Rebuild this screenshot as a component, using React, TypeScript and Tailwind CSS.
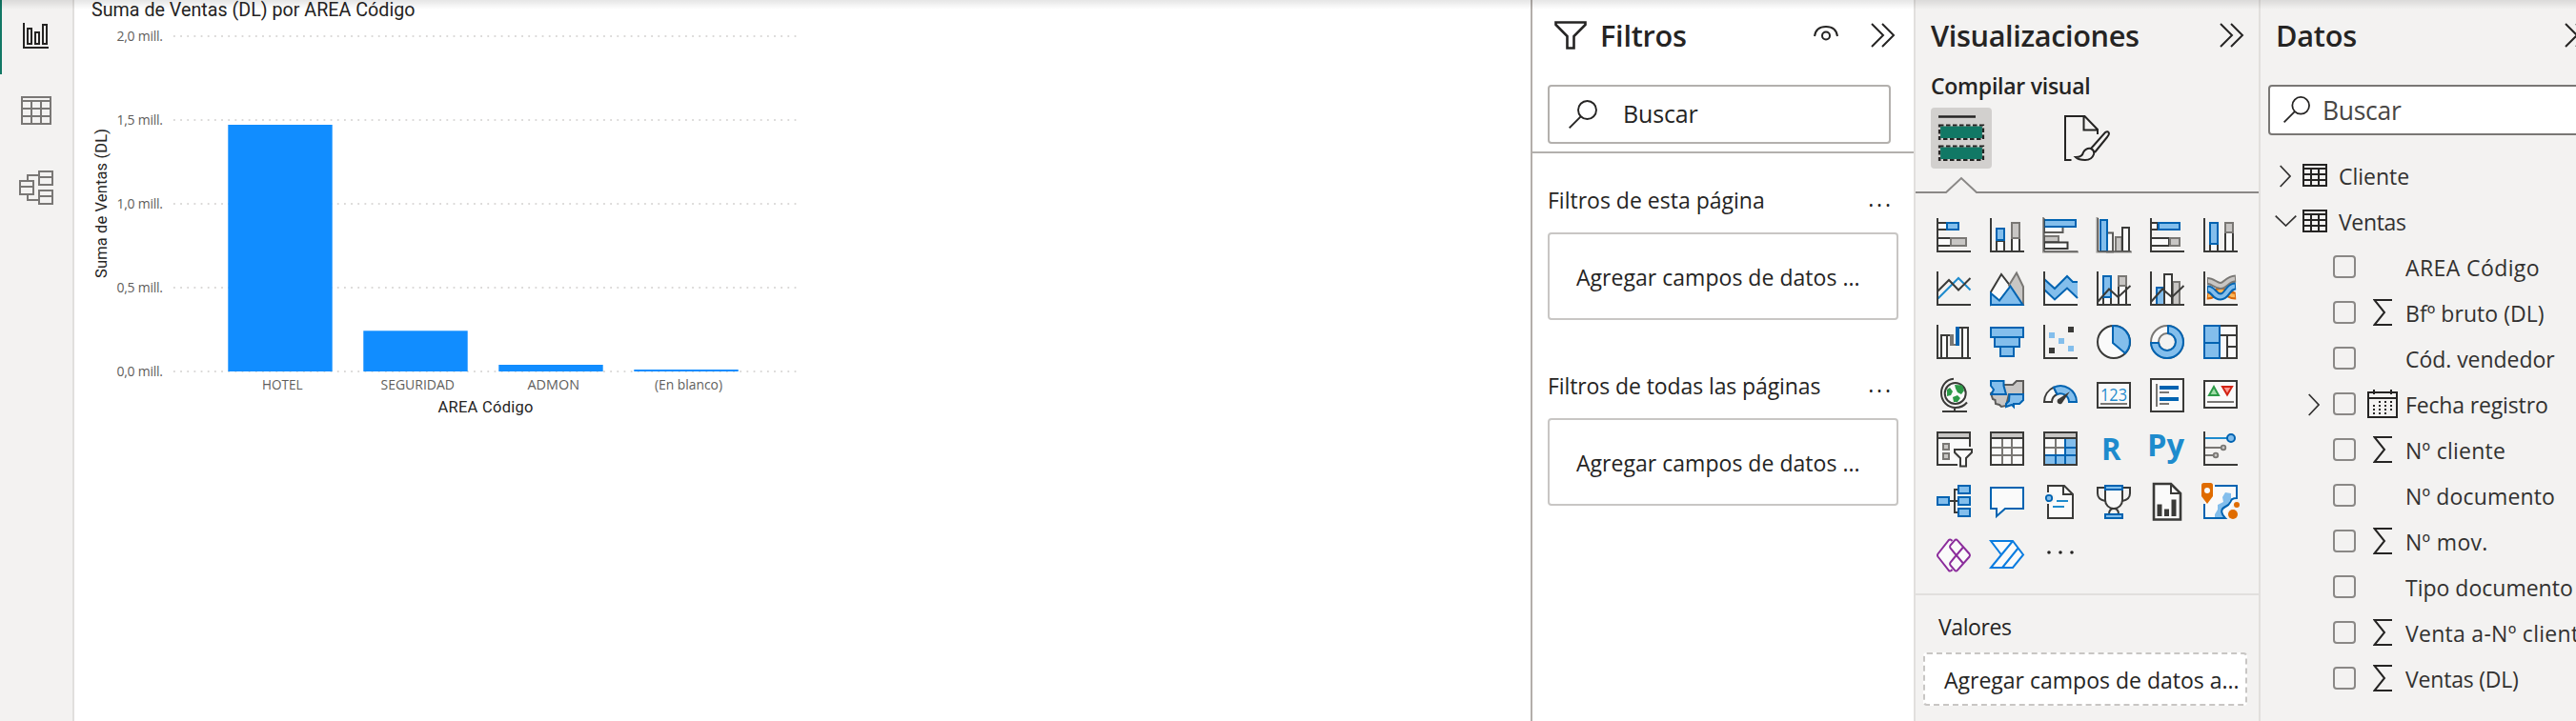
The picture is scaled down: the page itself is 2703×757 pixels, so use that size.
import type { ReactNode } from "react";

const D = "#3a3a38";
const B = "#0063b1";
const L = "#83beec";
const G = "#797774";
const S = "#c8c6c4";
const W = "#fafafa";
const T = "#1e8bcd";

type RectProps = { x: number; y: number; w: number; h: number; s?: string; f?: string };
const R = ({ x, y, w, h, s = D, f = W }: RectProps) => (
  <rect x={x} y={y} width={w} height={h} stroke={s} fill={f} strokeWidth={2} />
);
const Axis = () => <path d="M1 0V35H36" stroke={D} strokeWidth={2} fill="none" />;
const P = ({ d, s = D, f = "none", w = 2 }: { d: string; s?: string; f?: string; w?: number }) => (
  <path d={d} stroke={s} fill={f} strokeWidth={w} />
);

const visuals: { name: string; art: ReactNode }[] = [
  { name: "stacked-bar", art: <><R x={1} y={5} w={10} h={7} /><R x={11} y={5} w={12} h={7} s={B} f={L} /><R x={1} y={21} w={14} h={8} /><R x={15} y={21} w={16} h={8} s={G} f={S} /><Axis /></> },
  { name: "stacked-column", art: <><R x={7} y={24} w={8} h={11} /><R x={7} y={11} w={8} h={12} s={B} f={L} /><R x={23} y={21} w={8} h={14} /><R x={23} y={5} w={8} h={16} s={G} f={S} /><Axis /></> },
  { name: "clustered-bar", art: <><R x={1} y={9} w={19.5} h={6} s={"#5c5b59"} /><R x={1} y={2} w={33} h={7} s={B} f={L} /><R x={1} y={19} w={15} h={6} s={G} f={S} /><R x={1} y={25.5} w={24.5} h={6.5} /><P d="M0 -1V35.5H37" s="#979593" w={2} /><P d="M1 0V35H36" w={1} /></> },
  { name: "clustered-column", art: <><R x={11} y={15.5} w={6} h={20} s={"#5c5b59"} /><R x={4} y={2} w={7} h={33} s={B} f={L} /><R x={20} y={20} w={6.5} h={15} s={G} f={S} /><R x={27} y={10} w={7} h={25} /><P d="M0.5 -1V35.5H37" s="#979593" w={2} /><P d="M1.5 0V35H36" w={1} /></> },
  { name: "full-bar", art: <><R x={1} y={5} w={7} h={7} /><R x={9} y={5} w={22} h={7} s={B} f={L} /><R x={1} y={21} w={19} h={8} /><R x={21} y={21} w={10} h={8} s={G} f={S} /><Axis /></> },
  { name: "full-column", art: <><R x={7} y={27} w={8} h={8} /><R x={7} y={5} w={8} h={22} s={B} f={L} /><R x={23} y={15} w={8} h={20} /><R x={23} y={5} w={8} h={10} s={G} f={S} /><Axis /></> },

  { name: "line", art: <><P d="M1.5 28.5L23 7L35.5 19.5" s={T} /><P d="M1 21L13 9L23 19.5L35.5 7" /><Axis /></> },
  { name: "area", art: <><P d="M1 35V21.5L12 3L22 16L10 31Z" f={W} /><P d="M20 14.5L28 1.5L35 16V35H33Z" s={G} f={S} /><P d="M1 35V23L10 30.5L21.5 15.5L34.5 35Z" s={B} f={L} /></> },
  { name: "stacked-area", art: <><path d="M1 18L12 28L25 17L36 28V35H1Z" fill={W} /><path d="M1 8L12 18L25 5L31 11H36V28L25 17.5L12 29.5L1 19Z" fill={L} /><P d="M1 8L12 18L25 5L31 11H36M1 19L12 29.5L25 17.5L36 28" s={B} /><Axis /></> },
  { name: "line-stacked", art: <><R x={7} y={27} w={8} h={8} /><R x={7} y={5} w={8} h={22} s={B} f={L} /><R x={23} y={15} w={8} h={20} /><R x={23} y={5} w={8} h={10} s={G} f={S} /><P d="M1 32L13 18.5L22.5 27L35.5 15" /><Axis /></> },
  { name: "line-clustered", art: <><R x={7} y={17} w={8} h={18} s={B} f={L} /><R x={24} y={11} w={7} h={24} s={G} f={S} /><R x={15} y={3} w={8} h={32} /><P d="M1 32L13 18.5L23 27L35.5 15" /><Axis /></> },
  { name: "ribbon", art: <><P d="M4 25.5C10 26 13 20.5 18.5 20.5S27 26 34 25.5" s="#d9690a" w={8} /><P d="M5 25.5C10 26 13 20.5 18.5 20.5S27 26 33 25.5" s="#fdb759" w={3.5} /><P d="M4 10C10 10 13 15 18 15S25 8 34 7.5" s={G} w={8} /><P d="M5 10C10 10 13 15 18 15S25 8 33 7.5" s={S} w={4} /><P d="M4 18.5C11 18.5 11 26.5 18 26.5S25 16 34 15.5" s={B} w={8} /><P d="M5 18.5C11 18.5 11 26.5 18 26.5S25 16 33 15.5" s={L} w={4} /><Axis /></> },

  { name: "waterfall", art: <><P d="M4 11H16" s={D} /><R x={5} y={11} w={6} h={24} /><rect x={14} y={10} width={4} height={12} fill={G} /><path d="M18 20H22V22H18Z" fill={G} /><rect x={20} y={2} width={4} height={20} fill={B} /><P d="M24 3H30" /><R x={27} y={3} w={6} h={32} /><Axis /></> },
  { name: "funnel", art: <><R x={1} y={3} w={34} h={10} s={B} f={L} /><R x={5} y={13} w={26} h={10} s={B} f={L} /><R x={11} y={23} w={14} h={10} s={B} f={L} /></> },
  { name: "scatter", art: <><rect x={6} y={8} width={6} height={6} fill={L} /><rect x={26} y={2} width={6} height={6} fill={D} /><rect x={16} y={14} width={6} height={6} fill={L} /><rect x={26} y={22} width={6} height={6} fill={L} /><rect x={6} y={24} width={6} height={6} fill={D} /><Axis /></> },
  { name: "pie", art: <><circle cx={18} cy={18} r={17} fill={W} stroke={D} strokeWidth={2} /><P d="M17 1A17 17 0 0 1 30 30L17 19Z" s={B} f={L} /></> },
  { name: "donut", art: <><circle cx={18} cy={18} r={17} fill={W} stroke={G} strokeWidth={2} /><circle cx={18} cy={18} r={9} fill="#f3f2f1" stroke={G} strokeWidth={2} /><P d="M19 1A17 17 0 1 1 1 19H9A9 9 0 1 0 19 9Z" s={B} f={L} /></> },
  { name: "treemap", art: <><R x={1} y={1} w={34} h={34} /><P d="M18 11H35M25 11V35M25 23H35" /><R x={1} y={1} w={16} h={18} s={B} f={L} /><R x={1} y={19} w={16} h={16} s={B} f={L} /></> },

  { name: "map", art: <><circle cx={19.7} cy={16} r={11} fill={W} stroke={D} strokeWidth={2} /><path d="M19 7L27 7.5L29 13L26 17L22 15L20 11ZM11 12L14 10L17 14L15 18L11 19ZM17 20L22 18L25 21L22 25H18Z" fill="#2c9a47" /><P d="M18 0.8C10 1.5 5 8 5 15.5C5 25 12 31 20 31C25 31 29 29 32 25.5M19 31V35M6 35H32" /></> },
  { name: "shape-map", art: <><P d="M14.5 7H24L28 3H35V17H20L17 29L12 30L10 28L6 27L5.5 23L3 22L1 16Z" s="#5c5b59" f={S} /><P d="M1 3H14.5V8L17 17H1.5L4 12L1 8Z" s={B} f={L} /><P d="M20.5 17H35V23L31 27H25V30L23 28L17 30V27L20 24Z" s={B} f={L} /></> },
  { name: "gauge", art: <><P d="M1 25A17 17 0 0 1 11 9.7L14.5 17A9 9 0 0 0 9 25Z" f={W} /><P d="M11 9.7A17 17 0 0 1 35 25H27A9 9 0 0 0 14.5 17Z" s={B} f={L} /><path d="M28 14L20.5 25A3 3 0 1 1 16.5 21.5Z" fill={D} /></> },
  { name: "card", art: <><R x={1} y={5} w={34} h={26} /><text x={4} y={24} fontSize={19} textLength={28} lengthAdjust="spacingAndGlyphs" fill={T} className="font-['Open_Sans',sans-serif]">123</text><P d="M4 27H32" s={G} /></> },
  { name: "multi-card", art: <><R x={1} y={1} w={34} h={34} /><P d="M7 6V30M10 15H20M10 27H20" s={G} /><P d="M10 10H30M10 22H30" s={B} w={4} /></> },
  { name: "kpi", art: <><R x={1} y={3} w={34} h={28} /><P d="M6 18L11 9L16 18Z" s="#2c9a47" f="#a1dda8" /><P d="M20 9H30L25 17.5Z" s="#d32314" f="#ff9a93" /><P d="M4 25H32" s={G} /></> },

  { name: "slicer", art: <><path d="M1 1H35V18H18V25L24 31V35H1Z" fill={W} /><rect x={1} y={1} width={34} height={6} fill={S} /><P d="M35 16V1H1V35H22M1 7H35" /><R x={7} y={13} w={6} h={6} s={G} f={S} /><R x={7} y={23} w={6} h={6} s={G} f={S} /><P d="M19 19H37V22L31 28V36.5H25V28L19 22Z" f={W} /></> },
  { name: "table", art: <><R x={1} y={1} w={34} h={34} /><P d="M13 8V34M23 8V34M2 17H34M2 25H34" s={G} /><R x={1} y={1} w={34} h={6} f={S} /></> },
  { name: "matrix", art: <><R x={1} y={1} w={34} h={34} /><P d="M13 8V24M2 17H23" s={G} /><path d="M23 8H34V34H2V25H23Z" fill={L} /><P d="M23 8V34M13 25V34M2 25H34M23 17H34" s={B} /><R x={1} y={1} w={34} h={6} f={S} /><P d="M1 0V36M35 0V36M0 35H36" /></> },
  { name: "r-script", art: <text x={5} y={30} fontSize={33} textLength={20.5} lengthAdjust="spacingAndGlyphs" fill={T} className="font-['Open_Sans',sans-serif] font-bold">R</text> },
  { name: "py-script", art: <text x={-3} y={26} fontSize={33} textLength={39} lengthAdjust="spacingAndGlyphs" fill={T} className="font-['Open_Sans',sans-serif] font-bold">Py</text> },
  { name: "key-influencers", art: <><P d="M2 7H25" s={T} /><P d="M2 17H19M2 25H11" s={G} /><circle cx={29} cy={7} r={4} fill={L} stroke={B} strokeWidth={2} /><circle cx={21} cy={17} r={2.3} fill={S} stroke={G} strokeWidth={1.8} /><circle cx={13} cy={25} r={2.3} fill={S} stroke={G} strokeWidth={1.8} /><Axis /></> },

  { name: "decomposition", art: <><P d="M14 17H22M22 5H19V29H22" /><R x={1} y={13} w={12} h={8} s={B} f={L} /><R x={23} y={1} w={12} h={8} s={B} f={L} /><R x={23} y={13} w={12} h={8} s={B} f={L} /><R x={23} y={25} w={12} h={8} s={B} f={L} /></> },
  { name: "qna", art: <P d="M1 3H35V25H16L7 33V25H1Z" s={B} f={W} /> },
  { name: "narrative", art: <><path d="M5 1H22L31 10V35H5Z" fill={W} /><P d="M5 8V1H22L31 10V35H5V20M21 1V10H31" /><circle cx={6} cy={14} r={6} fill="#f3f2f1" /><circle cx={6} cy={14} r={3.2} fill={L} stroke={B} strokeWidth={1.8} /><P d="M14 17H26M10 23H22" s={T} /></> },
  { name: "goals", art: <><P d="M9 3H1V9C1 13 4 16 9 17M27 3H35V9C35 13 32 16 27 17" /><P d="M9 5V16C9 21 13 25 18 25S27 21 27 16V5Z" f={W} /><P d="M13 31C13 27 15 25 18 25S23 27 23 31" /><R x={9} y={1} w={18} h={4} s={B} f={L} /><R x={9} y={31} w={18} h={4} s={B} f={L} /></> },
  { name: "paginated", art: <><P d="M4 -1H22L32 9V36.5H4Z" f={W} w={2.6} /><P d="M22 -1V9H32" /><path d="M7.5 20.5H12.5V33H7.5ZM15 25.5H20V33H15ZM22.5 15.5H27.5V33H22.5Z" fill={D} /></> },
  { name: "azure-map", art: <><path d="M1 1H35V14L23 35H1Z" fill={W} /><path d="M35 14H29V9L23 8L20 13L21 18L15 21V26L12 31V35H22L19 27L25 23L28 16Z" fill={L} /><P d="M12 1H35V14C26 14 31 20 23 23C17 26 19 31 23 35H1V20" s={B} /><path d="M-2 0.5Q-2 -2 0.5 -2H7.5Q10 -2 10 0.5V12L4 20L-2 12Z" fill="#e06c00" /><circle cx={4} cy={6} r={3} fill={W} /><circle cx={31} cy={31} r={6.5} fill="#f3f2f1" /><circle cx={31} cy={31} r={5} fill="#e06c00" /><circle cx={35} cy={21} r={3} fill="#e06c00" /></> },

  { name: "power-apps", art: <><P d="M16.5 3L15.5 2Q14 0.8 12.6 2.3L1.5 16.5Q0.5 18 1.5 19.5L12.6 33.7Q14 35.2 15.5 34L16.5 33" s="#8b2c9b" f={W} /><P d="M19 2.3Q20.5 0.5 22 2.3L34.5 16.5Q35.7 18 34.5 19.5L22 33.7Q20.5 35.5 19 33.7L14.5 28.5Q13.5 27 14.5 25.5L20.8 18L14.5 10.5Q13.5 9 14.5 7.5Z" s="#8b2c9b" f={W} /><P d="M28 9.5L20.8 18L28 26.5" s="#8b2c9b" /></> },
  { name: "power-automate", art: <P d="M1 3H24L35 17.5L24 31H1L12 17.5ZM24 3L1 31M30 10L13 31" s="#0a7ce0" f={W} /> },
  { name: "more", art: <path d="M4.2 15a1.8 1.8 0 1 0 3.6 0a1.8 1.8 0 1 0-3.6 0M16.2 15a1.8 1.8 0 1 0 3.6 0a1.8 1.8 0 1 0-3.6 0M28.2 15a1.8 1.8 0 1 0 3.6 0a1.8 1.8 0 1 0-3.6 0" fill="#252423" /> },
];

const fields: { label: string; icon?: "sum" | "date"; track: string }[] = [
  { label: "AREA Código", track: "tracking-[0.4px]" },
  { label: "Bfº bruto (DL)", icon: "sum", track: "tracking-[0.05px]" },
  { label: "Cód. vendedor", track: "tracking-[-0.05px]" },
  { label: "Fecha registro", icon: "date", track: "tracking-[-0.15px]" },
  { label: "Nº cliente", icon: "sum", track: "tracking-[0.25px]" },
  { label: "Nº documento", track: "tracking-[0.15px]" },
  { label: "Nº mov.", icon: "sum", track: "tracking-[0.3px]" },
  { label: "Tipo documento", track: "tracking-[0px]" },
  { label: "Venta a-Nº cliente", icon: "sum", track: "tracking-[0.28px]" },
  { label: "Ventas (DL)", icon: "sum", track: "tracking-[-0.2px]" },
];

const Collapse = () => (
  <svg width="26" height="26" viewBox="0 0 26 26" fill="none" stroke="#252423" strokeWidth="2" className="shrink-0">
    <path d="M1 1L13 13L1 25M12 1L24 13L12 25" />
  </svg>
);

const Search = ({ size }: { size: number }) => (
  <svg width={size} height={size} viewBox="0 0 30 30" fill="none" stroke="#252423" strokeWidth="1.9" className="mb-px shrink-0">
    <circle cx="19.5" cy="10.5" r="9.5" />
    <path d="M12.7 17.3L0.7 29.3" />
  </svg>
);

const GridIcon = () => (
  <svg width="26" height="24" viewBox="0 0 26 24" fill="none" stroke="#252423" strokeWidth="2" className="shrink-0">
    <path d="M1 0V24M25 0V24M0 1H26M0 5H26M0 11H26M0 17H26M0 23H26M9 5V23M17 5V23" />
  </svg>
);

const yTicks = [
  { label: "2,0 mill.", y: 38 },
  { label: "1,5 mill.", y: 126 },
  { label: "1,0 mill.", y: 214 },
  { label: "0,5 mill.", y: 302 },
  { label: "0,0 mill.", y: 390 },
];
const bars = [
  { label: "HOTEL", x: 239.3, top: 131, lx: 275, lw: 42.5 },
  { label: "SEGURIDAD", x: 381.3, top: 347.3, lx: 399.5, lw: 77.5 },
  { label: "ADMON", x: 523.3, top: 383, lx: 553.5, lw: 54.5 },
  { label: "(En blanco)", x: 665.3, top: 388, lx: 687, lw: 71 },
];

function Chart() {
  return (
    <svg width="820" height="450" viewBox="78 0 820 450" className="block shrink-0">
      <g fill="#252423" className="font-['Roboto',sans-serif]">
        <text x="96" y="17" fontSize="19.7" textLength="339.5" lengthAdjust="spacing">Suma de Ventas (DL) por AREA Código</text>
        <text x="459.5" y="433" fontSize="16.5" textLength="100" lengthAdjust="spacing">AREA Código</text>
        <text transform="translate(112 292) rotate(-90)" fontSize="16.5" textLength="157" lengthAdjust="spacing">Suma de Ventas (DL)</text>
      </g>
      <g fill="#605e5c" fontSize="14" className="font-['Open_Sans',sans-serif]">
        {yTicks.map((t) => (
          <g key={t.label}>
            <line x1="182" x2="837" y1={t.y} y2={t.y} stroke="#cfcdcb" strokeWidth="1.3" strokeDasharray="1.8 5.36" />
            <text x="122.5" y={t.y + 5.3} textLength="48.5" lengthAdjust="spacing">{t.label}</text>
          </g>
        ))}
        {bars.map((b) => (
          <g key={b.label}>
            <rect x={b.x} y={b.top} width="109.4" height={390 - b.top} fill="#118dff" />
            <text x={b.lx} y="409.3" textLength={b.lw} lengthAdjust="spacingAndGlyphs">{b.label}</text>
          </g>
        ))}
      </g>
    </svg>
  );
}

function FilterSection({ title, titleClass }: { title: string; titleClass: string }) {
  return (
    <section className="mb-[49px]">
      <div className="flex h-10 items-center justify-between pl-4 pr-[21px]">
        <span className={titleClass}>{title}</span>
        <span className="pb-1 text-[23px] leading-9 tracking-[2.9px]">...</span>
      </div>
      <div className="mx-4 mt-[14px] flex h-[92px] items-center rounded-[4px] border-2 border-[#c8c6c4] pt-0.5 pl-7">
        <span className="text-[23px] tracking-[0.03px]">Agregar campos de datos ...</span>
      </div>
    </section>
  );
}

export default function App() {
  return (
    <div className="relative flex h-[757px] w-full overflow-hidden bg-white font-['Open_Sans',sans-serif] text-[#252423]">
      <nav className="flex w-[78px] shrink-0 flex-col border-r-2 border-[#e1dfdd] bg-[#f3f2f1]">
        <div className="h-[78px] border-l-2 border-[#117865]">
          <svg width="74" height="78" viewBox="2 0 74 78" fill="none" stroke="#252423" strokeWidth="2">
            <path d="M25 24V50H51M29 30H33V46H29ZM37 34H41V46H37ZM45 26H49V46H45Z" />
          </svg>
        </div>
        <svg width="76" height="78" viewBox="0 78 76 78" fill="none" stroke="#797775" strokeWidth="2">
          <path d="M23 102H53V130H23ZM23 106H53M23 114H53M23 122H53M33 106V130M43 106V130" />
        </svg>
        <svg width="76" height="78" viewBox="0 156 76 78" fill="none" stroke="#797775" strokeWidth="2">
          <path d="M21 190H35V204H21ZM21 196H35M41 180H55V194H41ZM41 186H55M41 200H55V214H41ZM41 206H55M29 190V184H41M29 204V210H41" />
        </svg>
      </nav>

      <main className="flex min-w-0 flex-1">
        <Chart />
      </main>

      <aside className="w-[402px] shrink-0 border-l-2 border-[#b3aeaa]">
        <header className="flex h-[74px] items-center pl-[23px] pr-[19px]">
          <svg width="34" height="30" viewBox="0 0 34 30" fill="none" stroke="#252423" strokeWidth="2.6" className="shrink-0">
            <path d="M1.5 1.5H32.5V4L20.5 16V28.5H13.5V16L1.5 4Z" />
          </svg>
          <h2 className="ml-[14px] flex-1 text-[30.7px] leading-[74px] font-semibold tracking-[-0.25px]">Filtros</h2>
          <svg width="26" height="18" viewBox="0 0 26 18" fill="none" stroke="#252423" strokeWidth="2" className="mr-[34px] mb-1">
            <path d="M1 12C2 5 7 2 13 2S24 5 25 12" />
            <circle cx="13" cy="11.5" r="4" />
          </svg>
          <Collapse />
        </header>
        <div className="mt-[15px] ml-4 flex h-[62px] w-[360px] items-center rounded-[4px] border-2 border-[#b3b0ad] pl-5">
          <Search size={30} />
          <span className="ml-[27px] text-[25px] tracking-[-0.15px]">Buscar</span>
        </div>
        <div className="mt-2 mb-[29px] border-t-2 border-[#b3b0ad]" />
        <FilterSection title="Filtros de esta página" titleClass="text-[23px]" />
        <FilterSection title="Filtros de todas las páginas" titleClass="text-[23px] tracking-[-0.1px]" />
      </aside>

      <aside className="w-[362px] shrink-0 border-l-2 border-[#e1dfdd] bg-[#f3f2f1]">
        <header className="flex h-[74px] items-center justify-between pl-4 pr-[15px]">
          <h2 className="text-[30.7px] leading-[74px] font-semibold tracking-[-0.37px]">Visualizaciones</h2>
          <Collapse />
        </header>
        <h3 className="h-[39px] pl-4 text-[23px] leading-8 font-semibold tracking-[-0.25px]">Compilar visual</h3>
        <div className="flex pl-4">
          <div className="rounded-[4px] bg-[#d2d0ce]">
            <svg width="64" height="64" viewBox="0 0 64 64">
              <path d="M8 9.5H47" stroke="#252423" strokeWidth="2.5" />
              <path d="M9 18.5H55V33H9ZM9 40.5H55V55H9Z" fill="#117865" stroke="#d2d0ce" strokeWidth="2.2" />
              <path d="M9 18.5H55V33H9ZM9 40.5H55V55H9Z" fill="none" stroke="#252423" strokeWidth="2.2" strokeDasharray="4.5 2.5" />
            </svg>
          </div>
          <svg width="64" height="64" viewBox="0 0 64 64" fill="none" stroke="#252423" strokeWidth="2" className="ml-16">
            <path d="M19.5 55H13V9H33.5L47 23V28M32.5 9V23.5H47" />
            <path d="M40 43L55 26Q58 24 59 27Q59 29 57 31L44 47M24 52Q31 52 32 47Q35 42 40 43Q44 45 43 49Q41 55 34 55Q27 55 24 52Z" />
          </svg>
        </div>
        <svg width="360" height="26" viewBox="0 0 360 26" fill="none" stroke="#8a8886" strokeWidth="2" className="block">
          <path d="M0 25H32L48 10L64 25H360" />
        </svg>
        <div className="mt-[26px] grid h-[394px] w-[358px] auto-rows-[56px] grid-cols-6 pl-[22px]">
          {visuals.map((v) => (
            <svg key={v.name} width="36" height="36" viewBox="0 0 36 36" className="overflow-visible">
              {v.art}
            </svg>
          ))}
        </div>
        <div className="border-t-2 border-[#e1dfdd] px-2 pt-4">
          <h3 className="pl-4 text-[23px] leading-[34px] tracking-[-0.4px]">Valores</h3>
          <div className="mt-[10px] flex h-[56px] w-[340px] items-center rounded-[4px] border-2 border-dashed border-[#c8c6c4] bg-white pt-0.5 pl-5 whitespace-nowrap">
            <span className="text-[23px] tracking-[0px]">Agregar campos de datos a...</span>
          </div>
        </div>
      </aside>

      <aside className="w-[333px] shrink-0 overflow-hidden border-l-2 border-[#e1dfdd] bg-[#f3f2f1]">
        <div className="w-[380px]">
          <header className="flex h-[74px] items-center pl-4">
            <h2 className="w-[303px] text-[30.7px] leading-[74px] font-semibold tracking-[-0.25px]">Datos</h2>
            <Collapse />
          </header>
          <div className="mt-[15px] ml-2 flex h-[53px] w-[364px] items-center rounded-[4px] border-2 border-[#797775] bg-white pl-[14px] text-[#484644]">
            <Search size={28} />
            <span className="ml-[13px] pt-[3px] text-[26.5px] tracking-[-0.3px]">Buscar</span>
          </div>
          <div className="mt-[19px] text-[23px] text-[#323130]">
            <div className="flex h-12 items-center pl-5">
              <svg width="12" height="24" viewBox="0 0 12 24" fill="none" stroke="#323130" strokeWidth="1.7" className="mb-px"><path d="M0.7 1L11 12L0.7 23" /></svg>
              <div className="mr-3 mb-0.5 ml-3"><GridIcon /></div>
              <span>Cliente</span>
            </div>
            <div className="flex h-12 items-center pl-[15px]">
              <svg width="23" height="12" viewBox="0 0 23 12" fill="none" stroke="#323130" strokeWidth="1.7" className="mb-0.5"><path d="M0.7 0.7L11.5 11L22.3 0.7" /></svg>
              <div className="mr-3 mb-0.5 ml-1.5"><GridIcon /></div>
              <span className="tracking-[-0.35px]">Ventas</span>
            </div>
            {fields.map((f) => (
              <div key={f.label} className="flex h-12 items-center pl-[50px]">
                <div className="w-[26px]">
                  {f.icon === "date" && (
                    <svg width="12" height="24" viewBox="0 0 12 24" fill="none" stroke="#323130" strokeWidth="1.7"><path d="M0.7 1L11 12L0.7 23" /></svg>
                  )}
                </div>
                <div className="mb-0.5 h-6 w-6 rounded-[4px] border-2 border-[#8a8886]" />
                <div className="flex w-[52px] items-center justify-center pb-0.5 pl-1">
                  {f.icon === "sum" && (
                    <svg width="20" height="28" viewBox="0 0 20 28" fill="none" stroke="#252423" strokeWidth="2"><path d="M20 1H1.5L12 14L1.5 27H20" /></svg>
                  )}
                  {f.icon === "date" && (
                    <svg width="32" height="30" viewBox="0 0 32 30" fill="none" stroke="#252423" strokeWidth="2">
                      <path d="M1 3H31V29H1ZM1 9H31M7 0V5M25 0V5" />
                      <path d="M12 13H27M12 17H27M6 21H27M6 25H21M6 17H9" strokeDasharray="2 4" />
                    </svg>
                  )}
                </div>
                <span className={`whitespace-nowrap ${f.track}`}>{f.label}</span>
              </div>
            ))}
          </div>
        </div>
      </aside>

      <div className="pointer-events-none absolute inset-x-0 top-0 h-2.5 bg-gradient-to-b from-black/10 to-transparent" />
    </div>
  );
}
